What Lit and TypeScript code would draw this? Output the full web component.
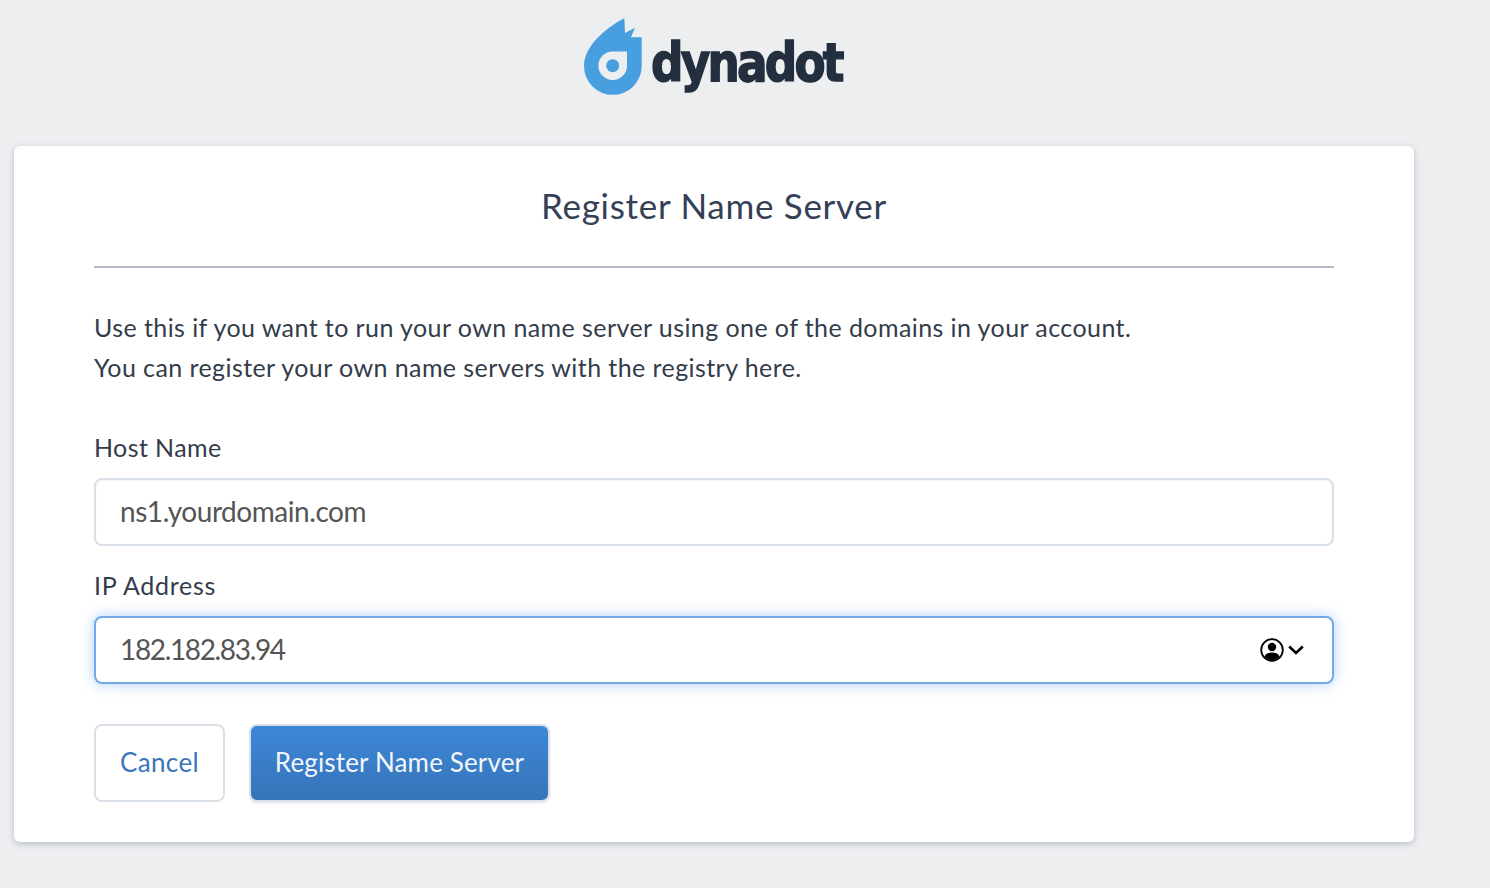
import { LitElement, html, css } from "lit";
import { customElement } from "lit/decorators.js";

@customElement("app-root")
export class AppRoot extends LitElement {
  static styles = css`
    :host {
      display: block;
      width: 1490px;
      height: 888px;
      overflow: hidden;
      background: #edeef0;
      font-family: "Lato", "Liberation Sans", sans-serif;
      color: #333c4a;
      box-sizing: border-box;
      padding: 0 76px 0 14px;
    }
    * { box-sizing: border-box; }
    .head {
      height: 146px;
      padding-top: 17px;
      display: flex;
      justify-content: center;
      align-items: flex-start;
    }
    .logo { width: 260px; display: flex; align-items: flex-start; gap: 7px; }
    .flame { width: 60px; height: 80px; display: block; flex: none; }
    .word {
      display: block;
      flex: none;
      transform: scaleX(0.95);
      transform-origin: left center;
      font-family: "DejaVu Sans", sans-serif;
      font-weight: 700;
      font-stretch: condensed;
      font-size: 53px;
      line-height: 60px;
      margin-top: 16px;
      color: #232f3e;
      letter-spacing: -2.9px;
      -webkit-text-stroke: 1.4px #232f3e;
    }
    .card {
      height: 696px;
      background: #fff;
      border-radius: 6px;
      box-shadow: 0 2px 6px rgba(120, 130, 155, 0.45);
      padding: 0 80px;
      display: flex;
      flex-direction: column;
    }
    h1 {
      margin: 0;
      height: 122px;
      border-bottom: 2px solid #b4bac8;
      text-align: center;
      font-weight: 400;
      font-size: 35px;
      line-height: 118px;
      letter-spacing: 0.72px;
      color: #344055;
    }
    .intro {
      margin: 39px 0 0;
      font-size: 25px;
      line-height: 40px;
      letter-spacing: 0.42px;
      color: #333c4a;
    }
    label { display: block; font-size: 25px; line-height: 30px; letter-spacing: 0.4px; color: #333c4a; }
    .l1 { margin-top: 45px; }
    .l2 { margin-top: 24px; letter-spacing: 0.7px; }
    .field {
      margin-top: 16px;
      height: 68px;
      display: flex;
      align-items: center;
      border: 2px solid #dae0e7;
      border-radius: 8px;
      padding: 0 28px 3px 24px;
      background: #fff;
      box-shadow: inset 0 1px 2px rgba(0, 0, 0, 0.05);
    }
    .field.focus {
      border-color: #72a9e6;
      box-shadow: 0 0 14px rgba(82, 150, 236, 0.45);
    }
    input {
      flex: 1;
      min-width: 0;
      border: 0;
      outline: 0;
      padding: 0;
      background: transparent;
      font: inherit;
      font-size: 28px;
      letter-spacing: -0.45px;
      color: #555;
    }
    #ip { letter-spacing: -1.35px; }
    input::placeholder { color: #555; opacity: 1; }
    .auto { display: flex; align-items: center; gap: 4px; margin-top: 3px; }
    .auto svg { display: block; }
    .actions { margin-top: 40px; display: flex; gap: 24px; }
    button {
      height: 78px;
      border-radius: 8px;
      font: inherit;
      font-size: 26px;
      padding: 0 0 2px;
      letter-spacing: 0.15px;
      cursor: pointer;
    }
    .cancel { width: 131px; background: #fff; border: 2px solid #dae0e7; color: #3a76b8; letter-spacing: 0.4px; }
    .primary {
      width: 301px;
      color: #f2f6fb;
      border: 2px solid #dae0e7;
      background: linear-gradient(#3d87d8, #3674b8);
      box-shadow: 0 2px 2px rgba(0, 0, 0, 0.06);
    }
  `;

  render() {
    return html`
      <div class="head">
        <div class="logo">
          <svg class="flame" viewBox="0 0 60 80" aria-hidden="true">
            <path fill="#489fdf" d="M40.3 1.3 L41 16 L51 10.7 L47 20.3 L57.7 20.3 L57.7 49 A28.85 28.85 0 0 1 0 49 C0 30 20 12 40.3 1.3 Z"/>
            <path fill="#edeef0" d="M43 34.4 L43 48.7 A14.3 14.3 0 1 1 28.7 34.4 Z"/>
            <circle fill="#489fdf" cx="28.7" cy="48.7" r="6.5"/>
          </svg>
          <span class="word">dynadot</span>
        </div>
      </div>
      <div class="card">
        <h1>Register Name Server</h1>
        <p class="intro">Use this if you want to run your own name server using one of the domains in your account.<br />You can register your own name servers with the registry here.</p>
        <label class="l1" for="host">Host Name</label>
        <div class="field"><input id="host" placeholder="ns1.yourdomain.com" /></div>
        <label class="l2" for="ip">IP Address</label>
        <div class="field focus">
          <input id="ip" value="182.182.83.94" />
          <span class="auto">
            <svg width="24" height="24" viewBox="0 0 24 24" aria-hidden="true">
              <circle cx="12" cy="12" r="10.8" fill="#fff" stroke="#000" stroke-width="1.8"/>
              <circle cx="12" cy="9" r="4.2" fill="#000"/>
              <path fill="#000" d="M4.4 18.4 C6 15.4 9 14.6 12 14.6 C15 14.6 18 15.4 19.6 18.4 A10 10 0 0 1 4.4 18.4 Z"/>
            </svg>
            <svg width="16" height="10" viewBox="0 0 16 10" aria-hidden="true">
              <path d="M1.2 1.5 L8 8 L14.8 1.5" fill="none" stroke="#000" stroke-width="2.6"/>
            </svg>
          </span>
        </div>
        <div class="actions">
          <button class="cancel">Cancel</button>
          <button class="primary">Register Name Server</button>
        </div>
      </div>
    `;
  }
}
